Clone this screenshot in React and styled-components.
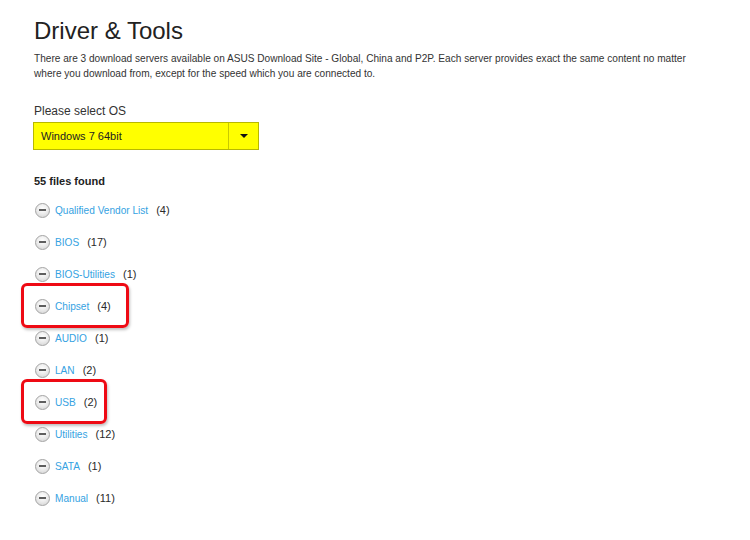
import React from "react";
import styled, { createGlobalStyle, css } from "styled-components";

const GlobalStyle = createGlobalStyle`
  html, body {
    margin: 0;
    padding: 0;
    background: #ffffff;
  }
  body {
    font-family: "Liberation Sans", Arial, sans-serif;
    color: #333333;
  }
`;

const categories = [
  { name: "Qualified Vendor List", count: 4 },
  { name: "BIOS", count: 17 },
  { name: "BIOS-Utilities", count: 1 },
  { name: "Chipset", count: 4, mark: 18 },
  { name: "AUDIO", count: 1 },
  { name: "LAN", count: 2 },
  { name: "USB", count: 2, mark: 10 },
  { name: "Utilities", count: 12 },
  { name: "SATA", count: 1 },
  { name: "Manual", count: 11 },
];

const App = () => {
  return (
    <>
      <GlobalStyle />
      <Page>
        <Title>Driver &amp; Tools</Title>
        <Intro>
          There are 3 download servers available on ASUS Download Site - Global, China and P2P. Each server provides
          exact the same content no matter
          <br />
          where you download from, except for the speed which you are connected to.
        </Intro>

        <Label>Please select OS</Label>
        <OsSelect>
          <span className="value">Windows 7 64bit</span>
          <span className="toggle">
            <Caret />
          </span>
        </OsSelect>

        <Found>55 files found</Found>

        <List>
          {categories.map((c) => (
            <Row key={c.name}>
              <Item $mark={c.mark}>
                <Collapse />
                <Link href="#">{c.name}</Link>
                <Count>({c.count})</Count>
              </Item>
            </Row>
          ))}
        </List>
      </Page>
    </>
  );
};

const Page = styled.div`
  padding: 17px 34px 20px;
`;

const Title = styled.h1`
  margin: 0;
  font-size: 24px;
  line-height: 28px;
  font-weight: normal;
  color: #222222;
`;

const Intro = styled.p`
  margin: 6px 0 0;
  font-size: 10.1px;
  line-height: 15px;
  color: #333333;
  white-space: nowrap;
`;

const Label = styled.div`
  margin-top: 23px;
  font-size: 12px;
  line-height: 15px;
  color: #333333;
`;

const OsSelect = styled.div`
  margin: 3px 0 0 -1px;
  width: 224px;
  height: 26px;
  display: flex;
  align-items: stretch;
  background: #ffff00;
  border: 1px solid #b8b800;

  .value {
    flex: 1;
    display: flex;
    align-items: center;
    padding-left: 7px;
    font-size: 11px;
    color: #222222;
  }
  .toggle {
    width: 29px;
    display: flex;
    align-items: center;
    justify-content: center;
    border-left: 1px solid #c9c900;
  }
`;

const Caret = styled.span`
  width: 0;
  height: 0;
  border-left: 4px solid transparent;
  border-right: 4px solid transparent;
  border-top: 4px solid #111111;
`;

const Found = styled.div`
  margin-top: 24px;
  font-size: 11px;
  line-height: 15px;
  font-weight: bold;
  color: #222222;
`;

const List = styled.ul`
  list-style: none;
  margin: 5px 0 0;
  padding: 0;
`;

const Row = styled.li`
  height: 32px;
  display: flex;
  align-items: center;
`;

const Item = styled.div`
  position: relative;
  display: inline-flex;
  align-items: center;
  height: 16px;
  font-size: 10.1px;

  ${({ $mark }) =>
    $mark &&
    css`
      &::after {
        content: "";
        position: absolute;
        top: -15px;
        bottom: -14px;
        left: -13px;
        right: -${$mark}px;
        border: 3px solid #ee0a14;
        border-radius: 6px;
        box-shadow: 1px 2px 3px rgba(0, 0, 0, 0.25);
      }
    `}
`;

const Collapse = styled.span`
  position: relative;
  box-sizing: border-box;
  width: 15px;
  height: 15px;
  margin: 0 5px 0 1px;
  border-radius: 50%;
  border: 1px solid #a4a4a4;
  background: radial-gradient(circle at 50% 35%, #ffffff 0%, #eeeeee 45%, #cfcfcf 100%);

  &::before {
    content: "";
    position: absolute;
    left: 3px;
    right: 3px;
    top: 5.5px;
    height: 2px;
    background: #5e5e5e;
  }
`;

const Link = styled.a`
  color: #35a2e2;
  text-decoration: none;
`;

const Count = styled.span`
  margin-left: 8px;
  color: #2a2a2a;
  font-size: 11px;
`;

export default App;
